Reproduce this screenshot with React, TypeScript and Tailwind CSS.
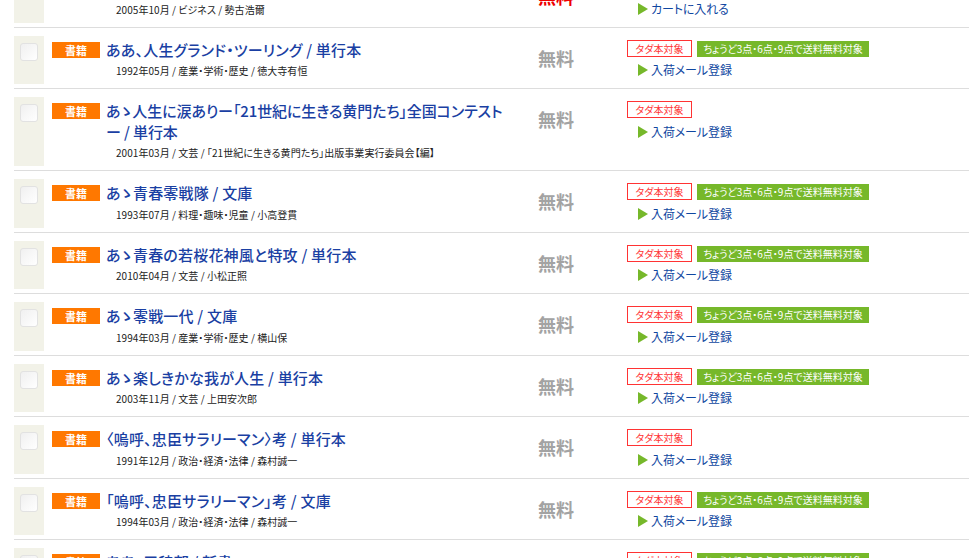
const FONT = "font-['Noto_Sans_CJK_JP','Noto_Sans',sans-serif] [font-feature-settings:'palt']"

type Item = {
  title: string
  meta: string
  green?: boolean
  cart?: boolean
  tight?: boolean
}

const items: Item[] = [
  { title: '\u00a0', meta: '2005年10月 / ビジネス / 勢古浩爾', cart: true },
  { title: 'ああ、人生グランド・ツーリング / 単行本', meta: '1992年05月 / 産業・学術・歴史 / 徳大寺有恒', green: true },
  { title: 'あゝ人生に涙ありー「21世紀に生きる黄門たち」全国コンテスト\nー / 単行本', meta: '2001年03月 / 文芸 / 「21世紀に生きる黄門たち」出版事業実行委員会【編】', tight: true },
  { title: 'あゝ青春零戦隊 / 文庫', meta: '1993年07月 / 料理・趣味・児童 / 小高登貫', green: true },
  { title: 'あゝ青春の若桜花神風と特攻 / 単行本', meta: '2010年04月 / 文芸 / 小松正照', green: true },
  { title: 'あゝ零戦一代 / 文庫', meta: '1994年03月 / 産業・学術・歴史 / 横山保', green: true },
  { title: 'あゝ楽しきかな我が人生 / 単行本', meta: '2003年11月 / 文芸 / 上田安次郎', green: true },
  { title: '〈嗚呼、忠臣サラリーマン〉考 / 単行本', meta: '1991年12月 / 政治・経済・法律 / 森村誠一' },
  { title: '「嗚呼、忠臣サラリーマン」考 / 文庫', meta: '1994年03月 / 政治・経済・法律 / 森村誠一', green: true },
  { title: 'ああ、五稜郭 / 新書', meta: '1990年01月 / 文芸 / 森村誠一', green: true },
]

function Row({ item }: { item: Item }) {
  return (
    <div className="flex ml-[14px] pt-[8px] pb-[4px] border-b border-[#dddddd]">
      <div className="w-[30px] shrink-0 bg-[#f2f2e8] pt-[7px] pl-[6px]">
        <div className="w-[18px] h-[18px] rounded-[3px] border border-[#e2e2e2] bg-gradient-to-br from-[#f0f0f0] to-white" />
      </div>

      <div className="w-[48px] h-[16px] shrink-0 ml-[8px] mt-[6px] bg-[#ff7800] text-white text-[11px] leading-[16px] font-bold text-center">
        書籍
      </div>

      <div className="w-[432px] shrink-0 ml-[6px] pt-[4px]">
        <div className={`text-[15px] leading-[20.5px] font-medium text-[#1a3fa3] whitespace-pre-line ${item.tight ? 'tracking-[-0.1px]' : 'tracking-[0.2px]'}`}>
          {item.title}
        </div>
        <div className="ml-[10px] h-[24px] text-[10px] leading-[22px] tracking-[0.05px] text-[#222222] whitespace-nowrap">
          {item.meta}
        </div>
      </div>

      <div className={`w-[89px] shrink-0 mt-[9px] text-[18px] leading-[26px] font-bold ${item.cart ? 'text-[#ee0000]' : 'text-[#a3a3a3]'}`}>
        無料
      </div>

      <div className="pt-[4px]">
        <div className="flex gap-[5px] h-[18px]">
          <div className="w-[65px] h-[17px] border border-[#ff3333] bg-white text-[#ff3333] text-[10px] leading-[15px] text-center">
            タダ本対象
          </div>
          {item.green && (
            <div className="w-[172px] h-[16px] mt-[1px] bg-[#76b82a] text-white text-[10px] leading-[16px] text-center whitespace-nowrap">
              ちょうど3点・6点・9点で送料無料対象
            </div>
          )}
        </div>
        <div className="flex items-center ml-[11px] mt-[2.5px] h-[20px]">
          <svg width="10" height="12" viewBox="0 0 10 12" className="shrink-0">
            <polygon points="0,0 10,6 0,12" fill="#76b82a" />
          </svg>
          <span className="ml-[3px] text-[12px] tracking-[-0.1px] text-[#0f47a1]">
            {item.cart ? 'カートに入れる' : '入荷メール登録'}
          </span>
        </div>
      </div>
    </div>
  )
}

export default function App() {
  return (
    <div className={`h-[558px] overflow-hidden bg-white ${FONT}`}>
      <div className="-mt-[34px]">
        {items.map((item, i) => (
          <Row key={i} item={item} />
        ))}
      </div>
    </div>
  )
}
